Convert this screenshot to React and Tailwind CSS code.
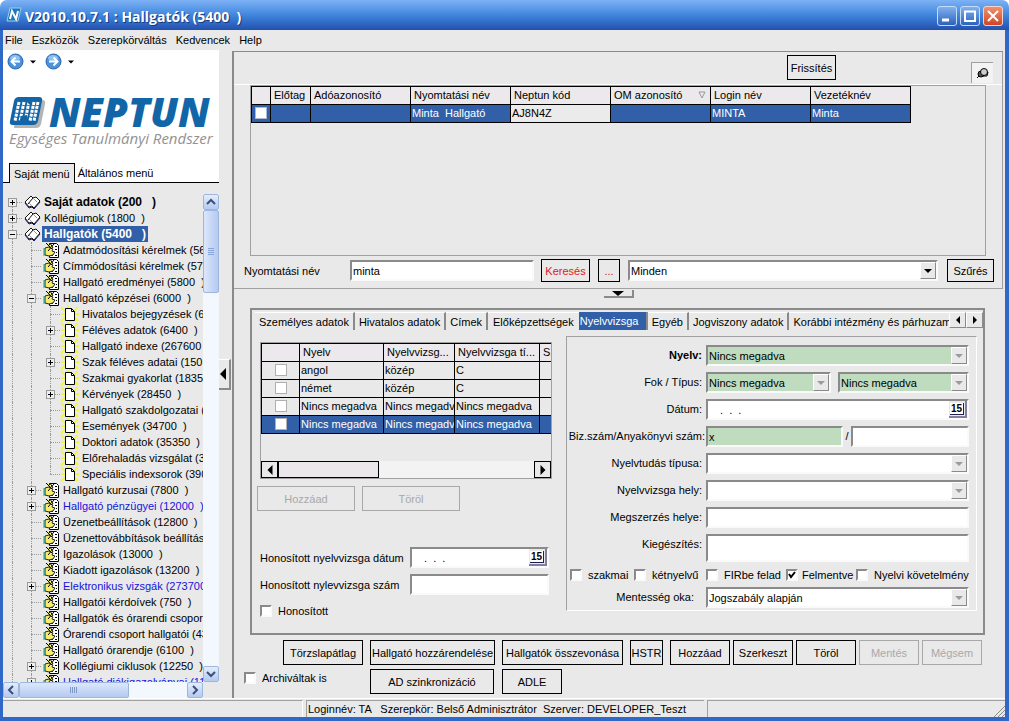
import React from 'react';
import clsx from 'clsx';

// level, icon, label, expander ('+', '-' or none), extra look
const TREE = [
  { level: 0, icon: 'book', label: 'Saját adatok (200   )', box: '+', bold: true, first: true },
  { level: 0, icon: 'book', label: 'Kollégiumok (1800  )', box: '+' },
  { level: 0, icon: 'book', label: 'Hallgatók (5400   )', box: '-', bold: true, selected: true },
  { level: 1, icon: 'form', label: 'Adatmódosítási kérelmek (5600  )' },
  { level: 1, icon: 'form', label: 'Címmódosítási kérelmek (5700  )' },
  { level: 1, icon: 'form', label: 'Hallgató eredményei (5800  )' },
  { level: 1, icon: 'form', label: 'Hallgató képzései (6000  )', box: '-' },
  { level: 2, icon: 'page', label: 'Hivatalos bejegyzések (6200  )' },
  { level: 2, icon: 'page', label: 'Féléves adatok (6400  )', box: '+' },
  { level: 2, icon: 'page', label: 'Hallgató indexe (267600  )' },
  { level: 2, icon: 'page', label: 'Szak féléves adatai (150  )', box: '+' },
  { level: 2, icon: 'page', label: 'Szakmai gyakorlat (18350  )' },
  { level: 2, icon: 'page', label: 'Kérvények (28450  )', box: '+' },
  { level: 2, icon: 'page', label: 'Hallgató szakdolgozatai (34000  )' },
  { level: 2, icon: 'page', label: 'Események (34700  )' },
  { level: 2, icon: 'page', label: 'Doktori adatok (35350  )' },
  { level: 2, icon: 'page', label: 'Előrehaladás vizsgálat (35500  )' },
  { level: 2, icon: 'page', label: 'Speciális indexsorok (390000  )', last: true },
  { level: 1, icon: 'form', label: 'Hallgató kurzusai (7800  )', box: '+' },
  { level: 1, icon: 'form', label: 'Hallgató pénzügyei (12000  )', box: '+', blue: true },
  { level: 1, icon: 'form', label: 'Üzenetbeállítások (12800  )' },
  { level: 1, icon: 'form', label: 'Üzenettovábbítások beállításai' },
  { level: 1, icon: 'form', label: 'Igazolások (13000  )' },
  { level: 1, icon: 'form', label: 'Kiadott igazolások (13200  )' },
  { level: 1, icon: 'form', label: 'Elektronikus vizsgák (273700  )', box: '+', blue: true },
  { level: 1, icon: 'form', label: 'Hallgatói kérdoívek (750  )' },
  { level: 1, icon: 'form', label: 'Hallgatók és órarendi csoportok' },
  { level: 1, icon: 'form', label: 'Órarendi csoport hallgatói (4300  )' },
  { level: 1, icon: 'form', label: 'Hallgató órarendje (6100  )' },
  { level: 1, icon: 'form', label: 'Kollégiumi ciklusok (12250  )', box: '+' },
  { level: 1, icon: 'form', label: 'Hallgató diákigazolványai (11000  )', box: '+', blue: true },
];

const EXAMS = [
  ['angol', 'közép', 'C'],
  ['német', 'közép', 'C'],
  ['Nincs megadva', 'Nincs megadva', 'Nincs megadva'],
  ['Nincs megadva', 'Nincs megadva', 'Nincs megadva'],
];

const SUNKEN = 'border-2 border-t-[#8a8a8a] border-l-[#8a8a8a] border-r-[#fafafa] border-b-[#fafafa]';

function BookIcon() {
  return (
    <svg width="17" height="14" viewBox="0 0 17 14">
      <path d="M1 7 L7 1 L9 3 L12 2 L16 6 L10 13 L8 11 L5 12 Z" fill="#fff" stroke="#111" />
      <path d="M1 8 L5 13 L8 12 L10 14 L16 7" fill="none" stroke="#15157a" />
      <path d="M9 3 L4 9" fill="none" stroke="#111" />
      <path d="M9 3 L13 7 M8 11 L5 8" fill="none" stroke="#999" />
    </svg>
  );
}

function FormIcon() {
  return (
    <svg width="17" height="16" viewBox="0 0 17 16">
      <path d="M6.500 1.500h7l2 2v12h-9z" fill="#fff" stroke="#000" />
      <path d="M12 4.500h2M12 7.500h2M11 10.500h1M13 10.500h1M8 13.500h2M12 13.500h2" stroke="#000" />
      <path d="M2 6l4-1 4 2-1 2 3 1-2 3-4 1-4-1z" fill="#f6ee6a" stroke="#222" />
      <path d="M3 1l6 6M7 1l3 5M11 2L5 9" stroke="#000" />
      <path d="M4 1l5 5" stroke="#e8dc20" />
      <path d="M1 6v8" stroke="#1aa38c" />
    </svg>
  );
}

function PageIcon() {
  return (
    <svg width="20" height="16" viewBox="0 0 20 16" className="shrink-0">
      <path d="M1 1l5 5M8 0v4M18 1l-4 4M1 8h4M19 8h-4M1 15l5-4M18 15l-4-4M10 13v3" stroke="#f5f53a" strokeWidth="2" />
      <path d="M5.500 2.500h6l3 3v9h-9z" fill="#fff" stroke="#000" />
      <path d="M11.500 2.500v3h3" fill="none" stroke="#000" />
    </svg>
  );
}

const ICONS = { book: BookIcon, form: FormIcon, page: PageIcon };

function Triangle({ dir = 'down', color = '#000', size = 8 }) {
  const points = {
    down: '0,2 8,2 4,6',
    left: '6,0 6,8 2,4',
    right: '2,0 2,8 6,4',
  };
  return (
    <svg width={size} height={size} viewBox="0 0 8 8" className="shrink-0">
      <polygon points={points[dir]} fill={color} />
    </svg>
  );
}

function Check({ label, className, boxClassName, ...props }) {
  return (
    <label className={clsx('flex items-center whitespace-nowrap', className)}>
      <span className="relative flex shrink-0">
        <input type="checkbox" className={clsx('peer h-3 w-3 appearance-none bg-white', boxClassName || SUNKEN)} {...props} />
        <svg width="8" height="8" viewBox="0 0 8 8" className="pointer-events-none absolute top-[2px] left-[2px] hidden peer-checked:block">
          <path d="M1 3l2 3 4-5" fill="none" stroke="#000" strokeWidth="2" />
        </svg>
      </span>
      {label}
    </label>
  );
}

function Select({ id, value, green, disabled, className, ...props }) {
  return (
    <div className={clsx('flex h-[21px] min-w-0', SUNKEN, green ? 'bg-[#bfdcbf]' : 'bg-white', className)}>
      <select id={id} disabled={disabled} className="min-w-0 flex-1 appearance-none bg-transparent pl-px text-black opacity-100" {...props}>
        <option>{value}</option>
      </select>
      <span className="pointer-events-none flex w-4 items-center justify-center border border-t-white border-l-white border-r-[#8a8a8a] border-b-[#8a8a8a] bg-[#e9e9e9]">
        <Triangle color={disabled ? '#9b9b9b' : '#000'} />
      </span>
    </div>
  );
}

function DateField({ id, className }) {
  return (
    <div className={clsx('flex h-[21px] min-w-0 bg-white', SUNKEN, className)}>
      <input id={id} defaultValue=".  .  ." className="min-w-0 flex-1 bg-transparent pl-3" />
      <button type="button" aria-label="Naptár" className="flex w-[18px] items-center justify-center border-r-2 border-b-2 border-[#8080a0] bg-[#e9e9e9]">
        <span className="border-r border-b border-[#202050] bg-white px-px text-[10px] leading-[11px] font-bold">15</span>
      </button>
    </div>
  );
}

function Button({ className, children, ...props }) {
  return (
    <button
      type="button"
      className={clsx(
        'flex shrink-0 items-center justify-center border border-black whitespace-nowrap disabled:border-[#a8a8a8] disabled:text-[#a8a8a8]',
        className
      )}
      {...props}
    >
      {children}
    </button>
  );
}

function Row({ label, id, bold, tight, children }) {
  return (
    <div className="flex items-start">
      <label
        htmlFor={id}
        className={clsx('flex w-[136px] shrink-0 justify-end leading-[21px] whitespace-nowrap', tight ? 'pr-px' : 'pr-1', bold && 'font-bold')}
      >
        {label}
      </label>
      <div className="flex min-w-0 flex-1">{children}</div>
    </div>
  );
}

function TitleBar() {
  return (
    <header className="flex h-[30px] shrink-0 items-center bg-gradient-to-b from-[#7db2f5] via-[#3f86dd] to-[#2450ae] pr-[6px] pl-[6px] text-white">
      <svg width="16" height="16" viewBox="0 0 16 16" className="shrink-0">
        <path d="M4 1h11l-3 13H1z" fill="#1d77b8" stroke="#9ccdf0" />
        <path d="M4 12l2-8 4 8 2-8" fill="none" stroke="#fff" strokeWidth="2" />
      </svg>
      <h1 className="flex-1 pt-[3px] pl-[3px] font-['Open_Sans',sans-serif] text-[14px] font-bold whitespace-pre [text-shadow:1px_1px_0_#163a80]">
        V2010.10.7.1 : Hallgatók (5400  )
      </h1>
      <div className="flex gap-[3px] pt-[2px]">
        <button type="button" aria-label="Kis méret" className="flex h-5 w-5 rounded-[3px] border border-[#c5dcf8] bg-gradient-to-b from-[#82b0f0] to-[#2c62bd]">
          <svg width="18" height="18" viewBox="0 0 18 18"><path d="M4 13h7" stroke="#fff" strokeWidth="3" /></svg>
        </button>
        <button type="button" aria-label="Teljes méret" className="flex h-5 w-5 rounded-[3px] border border-[#c5dcf8] bg-gradient-to-b from-[#82b0f0] to-[#2c62bd]">
          <svg width="18" height="18" viewBox="0 0 18 18"><path d="M4 5v9h10V5M3 4.500h12" fill="none" stroke="#fff" strokeWidth="2" /></svg>
        </button>
        <button type="button" aria-label="Bezárás" className="flex h-5 w-5 rounded-[3px] border border-[#f3d5cc] bg-gradient-to-b from-[#f09070] to-[#cf4520]">
          <svg width="18" height="18" viewBox="0 0 18 18"><path d="M4 4l10 10M14 4L4 14" stroke="#fff" strokeWidth="2" /></svg>
        </button>
      </div>
    </header>
  );
}

function NavArrow({ label, flip }) {
  return (
    <button type="button" aria-label={label} className="flex items-center gap-[6px]">
      <svg width="17" height="17" viewBox="0 0 17 17">
        <circle cx="8.500" cy="8.500" r="7.500" fill="#4c93dc" stroke="#2a62a8" />
        <ellipse cx="8" cy="5" rx="5" ry="3" fill="#8fc2f0" />
        <path d={flip ? 'M4 8.500h8M8.500 4.500l4 4-4 4' : 'M13 8.500H5M8.500 4.500l-4 4 4 4'} fill="none" stroke="#fff" strokeWidth="2" />
      </svg>
      <Triangle size={6} />
    </button>
  );
}

function Logo() {
  return (
    <div className="px-[6px] pt-6">
      <div className="flex items-center gap-[2px]">
        <svg width="38" height="33" viewBox="0 0 38 33" className="shrink-0">
          <path d="M9 4h24q4 0 3 4l-4 20q-1 4-5 4H5z" fill="#b4b4b4" />
          <path d="M10 1h20q4 0 3 4l-4 20q-1 4-5 4H4q-4 0-3-4L5 5q1-4 5-4z" fill="#1266a8" />
          <path d="M10 6L6 25M15 6l-4 19M20 6l-4 19M25 6l-4 19M29 6l-4 19" stroke="#fff" strokeWidth="3" strokeDasharray="3 1" />
          <path d="M16 4h7l-1 6z M12 20l6-1 1 8h-9z" fill="#1266a8" />
        </svg>
        <div className="font-['Open_Sans',sans-serif] text-[40px] leading-9 font-extrabold text-[#1266a8] italic">NEPTUN</div>
      </div>
      <div className="font-['Open_Sans',sans-serif] text-[15px] leading-4 whitespace-nowrap text-[#929292] italic">Egységes Tanulmányi Rendszer</div>
    </div>
  );
}

function TreeRow({ item }) {
  const Icon = ICONS[item.icon];
  const cells = [];
  for (let i = 0; i <= item.level; i++) {
    const own = i === item.level;
    cells.push(
      <span key={i} className="relative flex h-4 w-[19px] shrink-0 items-center justify-center">
        <span
          className={clsx(
            'absolute left-[9px] border-l border-dotted border-[#9a9a9a]',
            own && item.first ? 'top-2' : 'top-0',
            own && item.last ? 'bottom-2' : 'bottom-0'
          )}
        />
        {own && <span className="absolute top-2 right-0 left-[9px] border-t border-dotted border-[#9a9a9a]" />}
        {own && item.box && (
          <svg width="9" height="9" viewBox="0 0 9 9" className="relative">
            <rect x="0.500" y="0.500" width="8" height="8" fill="#efefef" stroke="#9a9a9a" />
            <path d={item.box === '+' ? 'M2 4.500h5M4.500 2v5' : 'M2 4.500h5'} stroke="#000" />
          </svg>
        )}
      </span>
    );
  }
  return (
    <li className="flex h-4 items-center">
      {cells}
      <span className="flex w-5 shrink-0 justify-center"><Icon /></span>
      <a
        href="#"
        className={clsx(
          'px-[2px] leading-4 whitespace-pre',
          item.bold && 'text-[12px] font-bold',
          item.selected && 'bg-[#315fa8] text-white',
          item.blue && 'text-[#1414dc]'
        )}
      >
        {item.label}
      </a>
    </li>
  );
}

const XP_BUTTON = 'flex h-4 w-4 shrink-0 items-center justify-center rounded-[2px] border border-[#9fb6dc] bg-gradient-to-b from-[#e4edfc] to-[#b4caf0]';

function XpArrow({ label, d }) {
  return (
    <button type="button" aria-label={label} className={XP_BUTTON}>
      <svg width="10" height="10" viewBox="0 0 10 10"><path d={d} fill="none" stroke="#3c4f78" strokeWidth="2" /></svg>
    </button>
  );
}

function Sidebar() {
  return (
    <aside className="flex w-[216px] shrink-0 flex-col">
      <div className="mt-px flex h-[133px] flex-col bg-white">
        <div className="flex gap-[9px] pt-[3px] pl-1">
          <NavArrow label="Vissza" />
          <NavArrow label="Előre" flip />
        </div>
        <Logo />
        <div className="mt-auto flex items-end">
          <span className="h-[1px] w-[6px] bg-black" />
          <button type="button" className="h-[20px] border border-b-0 border-black bg-[#e9e9e9] px-1 whitespace-nowrap">Saját menü</button>
          <button type="button" className="h-[20px] flex-1 border-b border-black px-[3px] text-left">Általános menü</button>
        </div>
      </div>
      <div className="flex min-h-0 flex-1 pt-[11px]">
        <ul className="h-full min-w-0 flex-1 overflow-hidden">
          {TREE.map((item) => <TreeRow key={item.label} item={item} />)}
        </ul>
        <div className="flex w-4 flex-col bg-[#f3f7fe]">
          <XpArrow label="Fel" d="M1 7l4-4 4 4" />
          <div className="flex h-[83px] items-center justify-center rounded-[2px] border border-[#9fb6dc] bg-gradient-to-r from-[#dce7fc] to-[#b4caf0]">
            <svg width="6" height="8" viewBox="0 0 6 8"><path d="M0 .5h6M0 2.500h6M0 4.500h6M0 6.500h6" stroke="#8aa5d8" /></svg>
          </div>
          <div className="mt-auto flex"><XpArrow label="Le" d="M1 3l4 4 4-4" /></div>
        </div>
      </div>
      <div className="mr-4 flex h-4 bg-[#f3f7fe]">
        <XpArrow label="Balra" d="M7 1L3 5l4 4" />
        <div className="flex w-[110px] items-center justify-center rounded-[2px] border border-[#9fb6dc] bg-gradient-to-b from-[#dce7fc] to-[#b4caf0]">
          <svg width="8" height="6" viewBox="0 0 8 6"><path d="M.5 0v6M2.500 0v6M4.500 0v6M6.500 0v6" stroke="#7f97c4" /></svg>
        </div>
        <div className="ml-auto flex"><XpArrow label="Jobbra" d="M3 1l4 4-4 4" /></div>
      </div>
    </aside>
  );
}

const TH = 'h-[18px] border border-black bg-[#ebe9ec] px-[3px] text-left align-top font-normal whitespace-nowrap overflow-hidden';
const TD = 'h-[18px] border border-black px-px align-top whitespace-nowrap overflow-hidden';

function StudentGrid() {
  return (
    <div className="mr-4 ml-4 min-h-[90px] flex-1 overflow-hidden border border-[#a0a0a0]">
      <table className="w-[659px] table-fixed border-collapse leading-[16px]">
        <colgroup>
          <col className="w-[19px]" />
          <col className="w-[40px]" />
          <col span="6" className="w-[100px]" />
        </colgroup>
        <thead>
          <tr>
            <th className={TH} />
            <th className={TH}>Előtag</th>
            <th className={TH}>Adóazonosító</th>
            <th className={TH}>Nyomtatási név</th>
            <th className={TH}>Neptun kód</th>
            <th className={TH}>
              <span className="flex items-center justify-between pr-px">
                OM azonosító
                <svg width="8" height="8" viewBox="0 0 8 8"><path d="M1 1h6L4 7z" fill="none" stroke="#999" /></svg>
              </span>
            </th>
            <th className={TH}>Login név</th>
            <th className={TH}>Vezetéknév</th>
          </tr>
        </thead>
        <tbody>
          <tr className="bg-[#315fa8] text-white">
            <td className={TD}><Check aria-label="Kijelölés" className="h-4 justify-center" boxClassName="border border-[#a9b9d8]" /></td>
            <td className={TD} />
            <td className={TD} />
            <td className={clsx(TD, 'whitespace-pre')}>Minta  Hallgató</td>
            <td className={clsx(TD, 'bg-[#ebebeb] text-black')}>AJ8N4Z</td>
            <td className={TD} />
            <td className={TD}>MINTA</td>
            <td className={TD}>Minta</td>
          </tr>
        </tbody>
      </table>
    </div>
  );
}

function ExamTable() {
  return (
    <div className="flex h-[137px] w-[292px] flex-col overflow-hidden border border-[#a0a0a0]">
      <table className="w-[303px] table-fixed border-collapse leading-[16px]">
        <colgroup>
          <col className="w-[38px]" />
          <col className="w-[84px]" />
          <col className="w-[71px]" />
          <col className="w-[85px]" />
          <col className="w-[25px]" />
        </colgroup>
        <thead>
          <tr>
            <th className={TH} />
            <th className={TH}>Nyelv</th>
            <th className={TH}>Nyelvvizsg...</th>
            <th className={TH}>Nyelvvizsga tí...</th>
            <th className={TH}>S</th>
          </tr>
        </thead>
        <tbody>
          {EXAMS.map((exam, i) => (
            <tr key={i} className={i === 3 ? 'bg-[#315fa8] text-white' : ''}>
              <td className={TD}><Check aria-label="Kijelölés" className="h-4 justify-center" boxClassName="border border-[#b0b0b0]" /></td>
              {exam.map((text, j) => <td key={j} className={TD}>{text}</td>)}
              <td className={TD} />
            </tr>
          ))}
        </tbody>
      </table>
      <div className="mt-auto flex h-[17px] shrink-0 bg-[#f3f3f3]">
        <button type="button" aria-label="Balra" className="flex w-[17px] items-center justify-center border border-black bg-[#e9e9e9]"><Triangle dir="left" size={10} /></button>
        <div className="w-[101px] border border-black bg-[#ebe7ea]" />
        <button type="button" aria-label="Jobbra" className="ml-auto flex w-[17px] items-center justify-center border border-black bg-[#e9e9e9]"><Triangle dir="right" size={10} /></button>
      </div>
    </div>
  );
}

const TAB = 'h-[18px] shrink-0 border-t border-r-2 border-t-white border-r-[#8a8a8a] px-1 whitespace-nowrap';

function TabStrip() {
  return (
    <div className="flex pt-[2px] pl-[3px]">
      <div role="tablist" className="flex min-w-0 flex-1 overflow-hidden">
        <button type="button" role="tab" className={TAB}>Személyes adatok</button>
        <button type="button" role="tab" className={TAB}>Hivatalos adatok</button>
        <button type="button" role="tab" className={TAB}>Címek</button>
        <button type="button" role="tab" className="h-[18px] shrink-0 border-t border-white px-[5px] whitespace-nowrap">Előképzettségek</button>
        <button type="button" role="tab" aria-selected="true" className="h-[18px] w-[69px] shrink-0 border-r-2 border-[#8a8a8a] bg-[#315fa8] px-px text-left text-white">Nyelvvizsga</button>
        <button type="button" role="tab" className={TAB}>Egyéb</button>
        <button type="button" role="tab" className={TAB}>Jogviszony adatok</button>
        <button type="button" role="tab" className="h-[18px] shrink-0 border-t border-white px-1 whitespace-nowrap">Korábbi intézmény és párhuzamos</button>
      </div>
      <button type="button" aria-label="Előző fülek" className="flex h-4 w-[17px] items-center justify-center border border-t-white border-l-white border-r-[#8a8a8a] border-b-[#8a8a8a]"><Triangle dir="left" /></button>
      <button type="button" aria-label="További fülek" className="flex h-4 w-[17px] items-center justify-center border border-t-white border-l-white border-r-[#8a8a8a] border-b-[#8a8a8a]"><Triangle dir="right" /></button>
    </div>
  );
}

function ExamForm() {
  return (
    <fieldset className="mt-[6px] mr-[6px] mb-[22px] flex min-w-0 flex-1 flex-col gap-[6px] border border-t-[#a0a0a0] border-l-[#a0a0a0] border-r-white border-b-white pt-2 pr-[7px] pb-[2px] pl-[3px]">
      <Row label="Nyelv:" id="nyelv" bold><Select id="nyelv" value="Nincs megadva" green disabled className="flex-1" /></Row>
      <Row label="Fok / Típus:" id="fok">
        <Select id="fok" value="Nincs megadva" green disabled className="w-[125px]" />
        <Select aria-label="Típus" value="Nincs megadva" green disabled className="ml-[7px] flex-1" />
      </Row>
      <Row label="Dátum:" id="datum"><DateField id="datum" className="flex-1" /></Row>
      <Row label="Biz.szám/Anyakönyvi szám:" id="biz" tight>
        <input id="biz" defaultValue="x" className={clsx('h-[21px] w-[137px] bg-[#bfdcbf] pl-px', SUNKEN)} />
        <span className="w-2 text-center leading-[21px]">/</span>
        <input aria-label="Anyakönyvi szám" className={clsx('h-[21px] min-w-0 flex-1 bg-white', SUNKEN)} />
      </Row>
      <Row label="Nyelvtudás típusa:" id="tipus"><Select id="tipus" value="" disabled className="flex-1" /></Row>
      <Row label="Nyelvvizsga hely:" id="hely"><Select id="hely" value="" disabled className="flex-1" /></Row>
      <Row label="Megszerzés helye:" id="megsz"><input id="megsz" className={clsx('h-[21px] min-w-0 flex-1 bg-white', SUNKEN)} /></Row>
      <Row label="Kiegészítés:" id="kieg"><textarea id="kieg" className={clsx('block h-7 min-w-0 flex-1 resize-none bg-white', SUNKEN)} /></Row>
      <div className="flex h-[13px] items-center">
        <Check label="szakmai" className="w-16 gap-[6px]" />
        <Check label="kétnyelvű" className="w-[72px] gap-[6px]" />
        <Check label="FIRbe felad" className="w-20 gap-[6px]" />
        <Check label="Felmentve" className="w-[70px] gap-1" defaultChecked />
        <Check label="Nyelvi követelmény" className="gap-[6px]" />
      </div>
      <div className="flex items-start">
        <label htmlFor="ment" className="w-[136px] shrink-0 pr-3 text-right leading-[21px]">Mentesség oka:</label>
        <Select id="ment" value="Jogszabály alapján" disabled className="flex-1" />
      </div>
    </fieldset>
  );
}

function DetailPanel() {
  return (
    <section className="mr-[18px] ml-4 border-2 border-[#8a8a8a]">
      <TabStrip />
      <div className="flex">
        <div className="w-[314px] shrink-0 pt-3 pl-[5px]">
          <div className="pl-[3px]"><ExamTable /></div>
          <div className="mt-[7px] flex gap-[7px]">
            <Button disabled className="h-[25px] w-[98px]">Hozzáad</Button>
            <Button disabled className="h-[25px] w-[98px]">Töröl</Button>
          </div>
          <div className="mt-[36px] flex items-center pl-[3px]">
            <label htmlFor="hdatum" className="w-[150px]">Honosított nyelvvizsga dátum</label>
            <DateField id="hdatum" className="w-[139px]" />
          </div>
          <div className="mt-[6px] flex items-center pl-[3px]">
            <label htmlFor="hszam" className="w-[150px]">Honosított nylevvizsga szám</label>
            <input id="hszam" className={clsx('h-[21px] w-[139px] bg-white', SUNKEN)} />
          </div>
          <Check label="Honosított" className="mt-[9px] gap-[6px] pl-[3px]" />
        </div>
        <ExamForm />
      </div>
    </section>
  );
}

function MainPanel() {
  return (
    <main className="mt-[2px] mr-[2px] flex min-w-0 flex-1 flex-col border-t border-l-2 border-[#8a8a8a]">
      <div className="flex min-h-0 flex-1 flex-col border-r border-b border-[#a0a0a0]">
        <div className="flex h-[33px] shrink-0 items-start justify-end border-b border-white pt-[3px]">
          <Button className="h-[25px] w-[49px]">Frissítés</Button>
          <button type="button" aria-label="Rögzítés" className="mt-[7px] mr-[9px] ml-[135px] flex h-[21px] w-[22px] items-center justify-center border-t border-l border-[#a0a0a0] bg-[#f3f3f3]">
            <svg width="13" height="12" viewBox="0 0 13 12">
              <path d="M1 11l3-3" stroke="#000" />
              <circle cx="5" cy="7" r="3" fill="#555" stroke="#000" />
              <circle cx="8" cy="5" r="3.500" fill="#ccc" stroke="#000" />
              <path d="M6 9l5 0 1-4" fill="none" stroke="#000" />
            </svg>
          </button>
        </div>
        <StudentGrid />
        <div className="flex items-center pt-[3px] pr-[8px] pb-[6px] pl-[10px]">
          <label htmlFor="nev" className="w-[106px] shrink-0">Nyomtatási név</label>
          <input id="nev" defaultValue="minta" className={clsx('h-[21px] w-[184px] bg-white pl-px', SUNKEN)} />
          <Button className="ml-[7px] h-[23px] w-[49px] text-[#e01818]">Keresés</Button>
          <Button className="ml-2 h-[23px] w-[22px] text-[#e01818]">...</Button>
          <Select aria-label="Szűrő" value="Minden" className="mr-[9px] ml-2 flex-1" />
          <Button className="h-[23px] w-[47px]">Szűrés</Button>
        </div>
      </div>
      <div className="flex h-[19px] shrink-0 items-start justify-center pt-px">
        <button type="button" aria-label="Lista elrejtése" className="flex h-2 w-[30px] items-center justify-center border-r-2 border-b-2 border-[#8a8a8a]">
          <svg width="12" height="6" viewBox="0 0 12 6"><polygon points="0,1 12,1 6,6" /></svg>
        </button>
      </div>
      <DetailPanel />
      <div className="flex flex-col gap-1 pt-[5px] pb-1">
        <div className="flex gap-[7px] pl-[49px]">
          <Button className="h-[25px] w-20">Törzslapátlag</Button>
          <Button className="h-[25px] w-[125px]">Hallgató hozzárendelése</Button>
          <Button className="h-[25px] w-[121px]">Hallgatók összevonása</Button>
          <Button className="h-[25px] w-[33px]">HSTR</Button>
          <div className="flex gap-[3px]">
            <Button className="h-[25px] w-[60px]">Hozzáad</Button>
            <Button className="h-[25px] w-[60px]">Szerkeszt</Button>
            <Button className="h-[25px] w-[60px]">Töröl</Button>
            <Button disabled className="h-[25px] w-[60px]">Mentés</Button>
            <Button disabled className="h-[25px] w-[60px]">Mégsem</Button>
          </div>
        </div>
        <div className="flex pl-[10px]">
          <Check label="Archiváltak is" className="w-[126px] gap-[6px] pb-2" />
          <Button className="h-[25px] w-[124px]">AD szinkronizáció</Button>
          <Button className="ml-2 h-[25px] w-[60px]">ADLE</Button>
        </div>
      </div>
    </main>
  );
}

export default function App() {
  return (
    <div className="flex h-screen min-h-[640px] flex-col overflow-hidden rounded-t-[7px] bg-[#e9e9e9] font-['Liberation_Sans',Arial,sans-serif] text-[11px] leading-[14px] text-black">
      <TitleBar />
      <div className="flex min-h-0 flex-1 flex-col border-r-4 border-b-4 border-l-[3px] border-[#3068c8]">
        <nav className="flex h-[19px] shrink-0 items-center gap-[9px] pl-[2px]">
          <a href="#">File</a>
          <a href="#">Eszközök</a>
          <a href="#">Szerepkörváltás</a>
          <a href="#">Kedvencek</a>
          <a href="#">Help</a>
        </nav>
        <div className="flex min-h-0 flex-1">
          <Sidebar />
          <div className="flex w-[13px] shrink-0 items-center pt-[2px]">
            <button type="button" aria-label="Menü elrejtése" className="flex h-[31px] w-[12px] items-center justify-end border-t border-r-2 border-b-2 border-[#8a8a8a] border-t-white"><Triangle dir="left" size={12} /></button>
          </div>
          <MainPanel />
        </div>
        <footer className="flex h-[19px] shrink-0 gap-[3px] border-t border-white pt-px whitespace-pre">
          <div className="w-[300px] border-t border-r border-t-[#a0a0a0] border-r-white" />
          <div className="w-[398px] border-t border-l border-[#a0a0a0] pl-px leading-4">Loginnév: TA   Szerepkör: Belső Adminisztrátor  Szerver: DEVELOPER_Teszt</div>
          <div className="flex flex-1 items-end justify-end border-t border-l border-[#a0a0a0]">
            <svg width="12" height="12" viewBox="0 0 12 12"><path d="M1 12L12 1M5 12l7-7M9 12l3-3" stroke="#8a8a8a" /></svg>
          </div>
        </footer>
      </div>
    </div>
  );
}
